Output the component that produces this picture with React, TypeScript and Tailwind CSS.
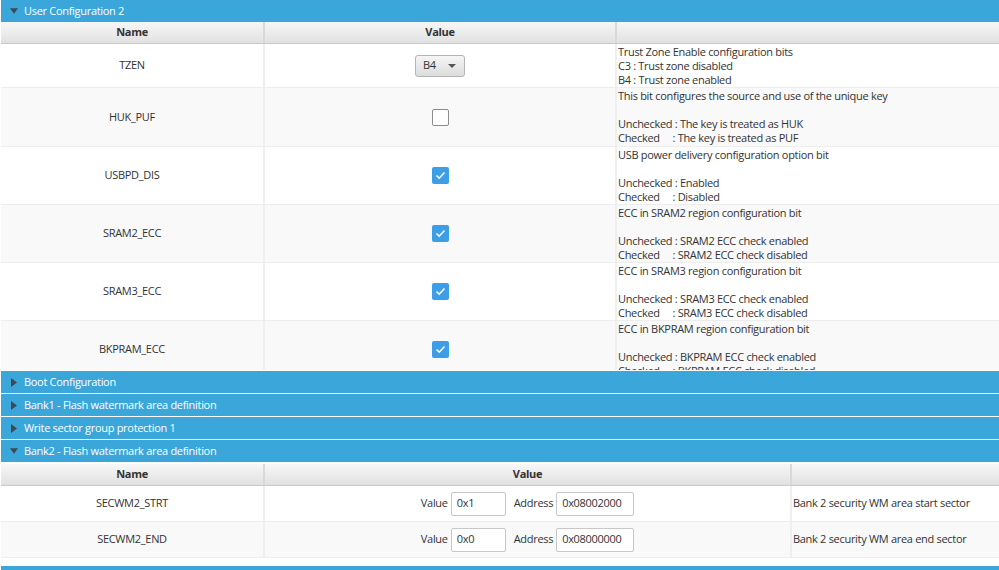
import type { ReactNode } from 'react';

const font = { fontFamily: '"Open Sans", "Noto Sans", sans-serif' };

function SectionBar({ title, open }: { title: string; open?: boolean }) {
  return (
    <div className="flex h-[22px] items-center bg-[#3ba6da] pl-[9px] text-[11px] text-white">
      <span className="mr-[6px] flex w-[8px] justify-center">
        {open ? (
          <svg width="9" height="6" viewBox="0 0 9 6">
            <path d="M0 0 L9 0 L4.5 6 Z" fill="#3d4a55" />
          </svg>
        ) : (
          <svg width="6" height="9" viewBox="0 0 6 9">
            <path d="M0 0 L6 4.5 L0 9 Z" fill="#3d4a55" />
          </svg>
        )}
      </span>
      {title}
    </div>
  );
}

function HeaderRow({ cols }: { cols: string }) {
  return (
    <div
      className={`grid ${cols} h-[22px] border-b border-[#c9c9c9] bg-gradient-to-b from-[#f7f7f7] to-[#e1e1e1] text-[11px] font-bold text-[#333]`}
    >
      <div className="flex items-center justify-center border-r-2 border-[#d9d9d9]">Name</div>
      <div className="flex items-center justify-center border-r-2 border-[#d9d9d9]">Value</div>
      <div />
    </div>
  );
}

function Checkbox({ checked }: { checked?: boolean }) {
  if (!checked) {
    return <div className="h-[17px] w-[17px] rounded-[2px] border border-[#8c8c8c] bg-white" />;
  }
  return (
    <div className="flex h-[17px] w-[17px] items-center justify-center rounded-[2px] bg-[#3b9ee6]">
      <svg width="11" height="9" viewBox="0 0 11 9">
        <path d="M1.5 4.5 L4.2 7.2 L9.5 1.5" fill="none" stroke="white" strokeWidth="1.6" />
      </svg>
    </div>
  );
}

function Combo() {
  return (
    <div className="flex h-[22px] w-[50px] items-center justify-between rounded-[3px] border border-[#b5b5b5] bg-gradient-to-b from-[#f5f5f5] to-[#dcdcdc] pl-[7px] pr-[8px] text-[11px] text-[#333]">
      <span>B4</span>
      <svg width="8" height="4" viewBox="0 0 8 4">
        <path d="M0 0 L8 0 L4 4 Z" fill="#555" />
      </svg>
    </div>
  );
}

type Row = { name: string; value: ReactNode; desc: string[]; h: string };

const rows: Row[] = [
  {
    name: 'TZEN',
    value: <Combo />,
    desc: ['Trust Zone Enable configuration bits', 'C3 : Trust zone disabled', 'B4 : Trust zone enabled'],
    h: 'h-[44px]',
  },
  {
    name: 'HUK_PUF',
    value: <Checkbox />,
    desc: [
      'This bit configures the source and use of the unique key',
      '',
      'Unchecked : The key is treated as HUK',
      'Checked     : The key is treated as PUF',
    ],
    h: 'h-[59px]',
  },
  {
    name: 'USBPD_DIS',
    value: <Checkbox checked />,
    desc: ['USB power delivery configuration option bit', '', 'Unchecked : Enabled', 'Checked     : Disabled'],
    h: 'h-[58px]',
  },
  {
    name: 'SRAM2_ECC',
    value: <Checkbox checked />,
    desc: [
      'ECC in SRAM2 region configuration bit',
      '',
      'Unchecked : SRAM2 ECC check enabled',
      'Checked     : SRAM2 ECC check disabled',
    ],
    h: 'h-[58px]',
  },
  {
    name: 'SRAM3_ECC',
    value: <Checkbox checked />,
    desc: [
      'ECC in SRAM3 region configuration bit',
      '',
      'Unchecked : SRAM3 ECC check enabled',
      'Checked     : SRAM3 ECC check disabled',
    ],
    h: 'h-[58px]',
  },
  {
    name: 'BKPRAM_ECC',
    value: <Checkbox checked />,
    desc: [
      'ECC in BKPRAM region configuration bit',
      '',
      'Unchecked : BKPRAM ECC check enabled',
      'Checked     : BKPRAM ECC check disabled',
    ],
    h: 'h-[58px]',
  },
];

function Field({ label, value, w }: { label: string; value: string; w: string }) {
  return (
    <div className="flex items-center gap-[3px]">
      <span>{label}</span>
      <div className={`flex h-[24px] ${w} items-center rounded-[2px] border border-[#c8c8c8] bg-white px-[5px]`}>
        {value}
      </div>
    </div>
  );
}

const bankRows = [
  { name: 'SECWM2_STRT', v: '0x1', addr: '0x08002000', desc: 'Bank 2 security WM area start sector' },
  { name: 'SECWM2_END', v: '0x0', addr: '0x08000000', desc: 'Bank 2 security WM area end sector' },
];

export default function App() {
  return (
    <div
      className="h-[570px] w-[999px] overflow-hidden bg-white pl-px text-[11px] tracking-[-0.3px] text-[#333]"
      style={font}
    >
      <SectionBar title="User Configuration 2" open />
      <HeaderRow cols="grid-cols-[264px_352px_1fr]" />
      <div className="h-[326px] overflow-hidden">
        {rows.map((r, i) => (
          <div
            key={r.name}
            className={`grid grid-cols-[264px_352px_1fr] ${r.h} border-b border-[#ededed] ${i % 2 ? 'bg-[#f9f9f9]' : 'bg-white'}`}
          >
            <div className="flex items-center justify-center border-r-2 border-[#efefef]">{r.name}</div>
            <div className="flex items-center justify-center border-r-2 border-[#efefef]">{r.value}</div>
            <div className="whitespace-pre pl-px pt-px leading-[14px]">
              {r.desc.map((d, j) => (
                <div key={j} className="h-[14px]">
                  {d}
                </div>
              ))}
            </div>
          </div>
        ))}
      </div>
      <div className="flex flex-col gap-px pb-[2px] pt-px">
        <SectionBar title="Boot Configuration" />
        <SectionBar title="Bank1 - Flash watermark area definition" />
        <SectionBar title="Write sector group protection 1" />
        <SectionBar title="Bank2 - Flash watermark area definition" open />
      </div>
      <HeaderRow cols="grid-cols-[264px_527px_1fr]" />
      {bankRows.map((r, i) => (
        <div
          key={r.name}
          className={`grid h-[36px] grid-cols-[264px_527px_1fr] border-b border-[#ededed] ${i % 2 ? 'bg-[#f9f9f9]' : 'bg-white'}`}
        >
          <div className="flex items-center justify-center border-r-2 border-[#efefef]">{r.name}</div>
          <div className="flex items-center justify-center gap-[8px] border-r-2 border-[#efefef]">
            <Field label="Value" value={r.v} w="w-[55px]" />
            <Field label="Address" value={r.addr} w="w-[78px]" />
          </div>
          <div className="flex items-center pl-px">{r.desc}</div>
        </div>
      ))}
      <div className="h-[8px]" />
      <div className="h-[10px] bg-[#3ba6da]" />
    </div>
  );
}
